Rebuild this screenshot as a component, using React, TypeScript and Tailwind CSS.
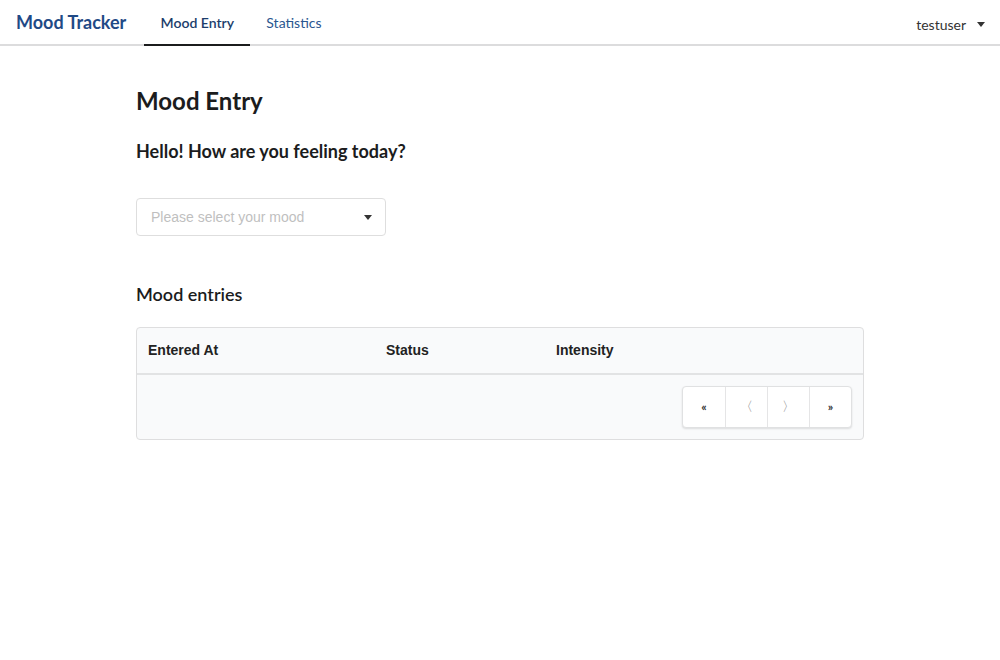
import { useState } from "react";

const lato = "font-['Lato','Noto_Sans',sans-serif]";
const sys = "font-['Liberation_Sans','Helvetica',sans-serif]";

function Caret({ className = "" }: { className?: string }) {
  return (
    <svg width="8" height="5" viewBox="0 0 8 5" className={className}>
      <path d="M0 0h8L4 5z" fill="currentColor" />
    </svg>
  );
}

export default function App() {
  const [tab, setTab] = useState("entry");

  return (
    <div className={`min-h-[660px] bg-white text-[#1b1c1d] ${lato}`}>
      <header className="flex h-[46px] items-stretch border-b-2 border-[#dcdcdd] bg-white">
        <div className="flex items-center pl-4 pr-[18px] text-[18px] font-bold text-[#1f4a86]">
          Mood Tracker
        </div>
        <nav className="flex items-stretch">
          <button
            onClick={() => setTab("entry")}
            className={`-mb-[2px] flex w-[106px] items-center justify-center border-b-2 pt-[1px] text-[14px] ${
              tab === "entry"
                ? "border-[#1b1c1d] font-semibold text-[#1b3d6b]"
                : "border-transparent text-[#2a5690]"
            }`}
          >
            Mood Entry
          </button>
          <button
            onClick={() => setTab("stats")}
            className={`-mb-[2px] flex items-center justify-center border-b-2 px-4 pt-[1px] text-[14px] ${
              tab === "stats"
                ? "border-[#1b1c1d] font-semibold text-[#1b3d6b]"
                : "border-transparent text-[#2a5690]"
            }`}
          >
            Statistics
          </button>
        </nav>
        <div className="ml-auto flex items-center gap-[11px] pr-[15px] pt-[4px] text-[14px] text-[#333]">
          testuser
          <Caret className="text-[#333]" />
        </div>
      </header>

      <main className="mx-auto w-[728px] pt-[40px]">
        <h1 className="text-[24px] font-bold leading-[30px]">Mood Entry</h1>
        <h2 className="mt-[23px] text-[18px] font-bold leading-[24px]">
          Hello! How are you feeling today?
        </h2>

        <button className="mt-[35px] flex h-[38px] w-[250px] items-center justify-between rounded-[4px] border border-[#dedede] bg-white pl-[14px] pr-[13px]">
          <span className={`${sys} text-[14px] text-[#bfbfbf]`}>
            Please select your mood
          </span>
          <Caret className="text-[#333]" />
        </button>

        <h3 className="mt-[46px] text-[18px] font-semibold leading-[24px]">
          Mood entries
        </h3>

        <div className="mt-[21px] overflow-hidden rounded-[4px] border border-[#dededf] bg-[#f9fafb]">
          <div
            className={`flex h-[47px] items-center border-b-2 border-[#e2e3e4] ${sys} text-[14px] font-bold text-[#222]`}
          >
            <div className="w-[249px] pl-[11px]">Entered At</div>
            <div className="w-[170px]">Status</div>
            <div>Intensity</div>
          </div>
          <div className="flex h-[64px] items-center justify-end pr-[11px]">
            <div className="flex h-[42px] overflow-hidden rounded-[4px] border border-[#e0e1e2] bg-white shadow-[0_1px_2px_rgba(0,0,0,0.12)]">
              {["«", "〈", "〉", "»"].map((c, i) => (
                <button
                  key={i}
                  className={`flex w-[42px] items-center justify-center ${
                    i > 0 ? "border-l border-[#e5e5e6]" : ""
                  } ${
                    i === 1 || i === 2
                      ? "text-[13px] text-[#888]"
                      : "text-[12px] font-bold text-[#333]"
                  }`}
                >
                  {c}
                </button>
              ))}
            </div>
          </div>
        </div>
      </main>
    </div>
  );
}
